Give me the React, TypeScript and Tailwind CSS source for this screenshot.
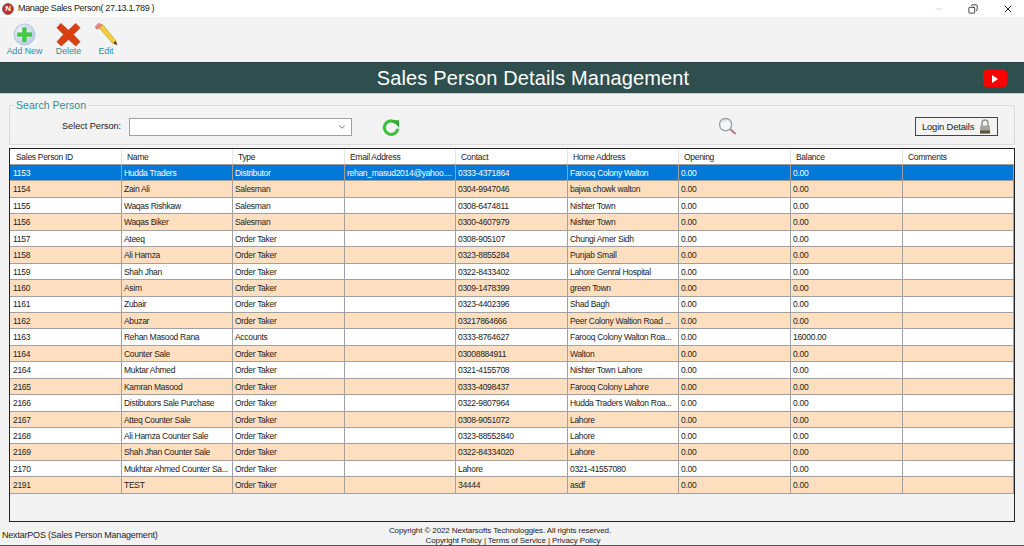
import React from "react";
import { Copy, X, Minus, ChevronDown } from "lucide-react";

const rows: string[][] = [
  ["1153","Hudda Traders","Distributor","rehan_masud2014@yahoo....","0333-4371864","Farooq Colony Walton","0.00","0.00",""],
  ["1154","Zain Ali","Salesman","","0304-9947046","bajwa chowk walton","0.00","0.00",""],
  ["1155","Waqas Rishkaw","Salesman","","0308-6474811","Nishter Town","0.00","0.00",""],
  ["1156","Waqas Biker","Salesman","","0300-4607979","Nishter Town","0.00","0.00",""],
  ["1157","Ateeq","Order Taker","","0308-905107","Chungi Amer Sidh","0.00","0.00",""],
  ["1158","Ali Hamza","Order Taker","","0323-8855284","Punjab Small","0.00","0.00",""],
  ["1159","Shah Jhan","Order Taker","","0322-8433402","Lahore Genral Hospital","0.00","0.00",""],
  ["1160","Asim","Order Taker","","0309-1478399","green Town","0.00","0.00",""],
  ["1161","Zubair","Order Taker","","0323-4402396","Shad Bagh","0.00","0.00",""],
  ["1162","Abuzar","Order Taker","","03217864666","Peer Colony Waltion Road ...","0.00","0.00",""],
  ["1163","Rehan Masood Rana","Accounts","","0333-8764627","Farooq Colony Walton Roa...","0.00","16000.00",""],
  ["1164","Counter Sale","Order Taker","","03008884911","Walton","0.00","0.00",""],
  ["2164","Muktar Ahmed","Order Taker","","0321-4155708","Nishter Town Lahore","0.00","0.00",""],
  ["2165","Kamran Masood","Order Taker","","0333-4098437","Farooq Colony Lahore","0.00","0.00",""],
  ["2166","Distibutors Sale Purchase","Order Taker","","0322-9807964","Hudda Traders Walton Roa...","0.00","0.00",""],
  ["2167","Atteq Counter Sale","Order Taker","","0308-9051072","Lahore","0.00","0.00",""],
  ["2168","Ali Hamza Counter Sale","Order Taker","","0323-88552840","Lahore","0.00","0.00",""],
  ["2169","Shah Jhan Counter Sale","Order Taker","","0322-84334020","Lahore","0.00","0.00",""],
  ["2170","Mukhtar Ahmed Counter Sa...","Order Taker","","Lahore","0321-41557080","0.00","0.00",""],
  ["2191","TEST","Order Taker","","34444","asdf","0.00","0.00",""],
];
const headers = ["Sales Person ID","Name","Type","Email Address","Contact","Home Address","Opening","Balance","Comments"];

function AddIcon() {
  return (
    <svg width="23" height="23" viewBox="0 0 24 24">
      <defs>
        <radialGradient id="ag" cx="40%" cy="35%" r="70%">
          <stop offset="0%" stopColor="#f6f9fd" />
          <stop offset="100%" stopColor="#b4c8e4" />
        </radialGradient>
      </defs>
      <circle cx="12" cy="12" r="11" fill="url(#ag)" stroke="#a9bfd9" strokeWidth="0.8" />
      <path d="M10 5h3.8v5.2H19.5v3.6h-5.7V19.5H10v-5.7H4.8V10.2H10z" fill="#3fcf3f" stroke="#2bab2b" strokeWidth="0.5" />
    </svg>
  );
}
function DeleteIcon() {
  return (
    <svg width="25" height="25" viewBox="0 0 26 26">
      <path d="M5 1.5 13 8.5 20.5 1.5 25 6 18 13 25 20.5 20.5 25 13 18 5.5 25 1 20.5 8 13 1 6z" fill="#d8400f" stroke="#b92c07" strokeWidth="0.7" />
    </svg>
  );
}
function EditIcon() {
  return (
    <svg width="24" height="24" viewBox="0 0 26 26">
      <path d="M5.5 6 9 2.5 23.5 20 25 25 20 23z" fill="#f2cf3c" stroke="#b08f1d" strokeWidth="0.6" />
      <path d="M1.5 5 4.5 1.5Q6 .8 7 2L9 3.5 5 7.5 2.5 7.5Q1 6.5 1.5 5z" fill="#e58a80" stroke="#a86a60" strokeWidth="0.4" />
      <path d="M21 22.8 23.3 20.6 25 25z" fill="#333" />
    </svg>
  );
}
function RefreshIcon() {
  return (
    <svg width="18" height="18" viewBox="0 0 20 20">
      <path d="M15.5 5.5A7.5 7.5 0 1 0 17.5 12" fill="none" stroke="#3fbf3f" strokeWidth="3.4" />
      <path d="M11 2.5H19V10.5z" fill="#2fa92f" />
    </svg>
  );
}
function SearchIcon() {
  return (
    <svg width="19" height="19" viewBox="0 0 20 20">
      <circle cx="8" cy="8" r="6.4" fill="#f4f7f9" stroke="#9aa3a7" strokeWidth="1.5" />
      <path d="M5 5.5Q6.5 3.5 9 4" fill="none" stroke="#cdd6db" strokeWidth="1" />
      <path d="M13 13 18.5 18" stroke="#b97a78" strokeWidth="2.2" />
    </svg>
  );
}
function LockIcon() {
  return (
    <svg width="12" height="15" viewBox="0 0 12 15">
      <path d="M3 7V4a3 3 0 0 1 6 0v3" fill="none" stroke="#8f8f8f" strokeWidth="1.4" />
      <rect x="1" y="6.5" width="10" height="8" rx="1" fill="#a6a39a" />
      <rect x="1" y="11.5" width="10" height="3" fill="#5e5536" />
    </svg>
  );
}

export default function App() {
  return (
    <div className="flex flex-col w-[1024px] h-[546px] overflow-hidden bg-[#f3f3f3] text-[8.5px] tracking-[-0.3px] leading-none text-[#222] font-['Liberation_Sans',Arial,sans-serif]">
      <div className="h-[17px] bg-white flex items-center shrink-0">
        <div className="ml-[2px] w-[12px] h-[12px] rounded-full bg-[#c8272d] border border-[#777] flex items-center justify-center text-white text-[8px] font-bold">N</div>
        <span className="ml-[4px] text-[9px] tracking-[-0.32px] text-[#222]">Manage Sales Person( 27.13.1.789 )</span>
        <div className="ml-auto flex items-center text-[#222]">
          <Minus size={10} className="mr-[24px] text-[#ccc]" />
          <Copy size={10} className="mr-[24px] -scale-x-100" />
          <X size={12} className="mr-[10px]" />
        </div>
      </div>

      <div className="h-[45px] flex shrink-0 text-[#2f8f9a] text-[8.8px] tracking-[0px]">
        <div className="flex flex-col items-center w-[37px] ml-[6px] pt-[6px]">
          <AddIcon />
          <span className="mt-[1px]">Add New</span>
        </div>
        <div className="flex flex-col items-center w-[25px] ml-[13px] pt-[5px]">
          <DeleteIcon />
          <span>Delete</span>
        </div>
        <div className="flex flex-col items-center w-[24px] ml-[13px] pt-[5px]">
          <EditIcon />
          <span className="mt-[1px]">Edit</span>
        </div>
      </div>

      <div className="relative h-[32px] shrink-0 bg-[#2f4f4f] border-t border-[#274141] border-b-[#c9cdcd] border-b flex items-center justify-center pl-[42px]">
        <span className="text-white text-[20px] tracking-[0.15px]">Sales Person Details Management</span>
        <div className="absolute right-[17px] top-[7px] w-[24px] h-[17px] bg-[#ff0000] rounded-[4px] flex items-center justify-center">
          <div className="w-0 h-0 border-y-[4px] border-y-transparent border-l-[6px] border-l-white" />
        </div>
      </div>

      <div className="relative mx-[9px] mt-[11px] w-[1006px] h-[40px] border border-[#dcdcdc] rounded-[2px] shrink-0 flex items-center">
        <span className="absolute left-[4px] -top-[6px] bg-[#f3f3f3] px-[2px] text-[#2f8f8f] text-[10.6px] tracking-[0px]">Search Person</span>
        <span className="ml-[52px] text-[9.2px] tracking-[-0.05px] mt-[3px]">Select Person:</span>
        <div className="ml-[8px] mt-[3px] w-[223px] h-[18px] bg-white border border-[#a0a0a0] flex items-center justify-end pr-[4px]">
          <ChevronDown size={10} className="text-[#555]" />
        </div>
        <div className="ml-[30px] mt-[3px]"><RefreshIcon /></div>
        <div className="ml-[318px] mt-[3px]"><SearchIcon /></div>
        <div className="ml-[178px] mt-[3px] w-[83px] h-[19px] border border-[#444] flex items-center justify-center gap-[5px] text-[9.4px] tracking-[-0.15px]">
          Login Details <LockIcon />
        </div>
      </div>

      <div className="ml-[9px] mt-[3px] w-[1006px] h-[374px] border border-[#222] bg-[#f3f3f3] shrink-0 overflow-hidden">
        <div className="grid grid-cols-[111px_111px_112px_111px_112px_111px_112px_112px_112px] h-[16px] bg-white border-b border-[#a0a0a0]">
          {headers.map((h) => (
            <div key={h} className="border-l border-[#e4e4e4] first:border-l-0 first:pl-[6px] pl-[5px] pt-[1px] flex items-center">{h}</div>
          ))}
        </div>
        {rows.map((r, i) => (
          <div
            key={r[0]}
            className={`grid grid-cols-[111px_111px_112px_111px_112px_111px_112px_112px_112px] h-[16.45px] border-b border-[#a0a0a0] ${
              i === 0 ? "bg-[#0078d7] text-white" : i % 2 === 1 ? "bg-[#ffdfbf]" : "bg-white"
            }`}
          >
            {r.map((c, j) => (
              <div key={j} className="border-l border-[#a0a0a0] first:border-l-0 first:pl-[3px] last:border-r pl-[2px] pt-[1px] flex items-center whitespace-nowrap overflow-hidden">{c}</div>
            ))}
          </div>
        ))}
      </div>

      <div className="relative flex-1 flex items-end">
        <span className="ml-[2px] mb-[5px] text-[9px] tracking-[-0.2px]">NextarPOS (Sales Person Management)</span>
        <div className="absolute left-[300px] w-[400px] top-[4px] text-center text-[8px] tracking-[-0.1px] leading-[9.5px]">
          <div>Copyright © 2022 Nextarsofts Technologgies. All rights reserved.</div>
          <div className="pl-[26px]">Copyright Policy | Terms of Service | Privacy Policy</div>
        </div>
      </div>
      <div className="h-px bg-[#555] shrink-0" />
    </div>
  );
}
